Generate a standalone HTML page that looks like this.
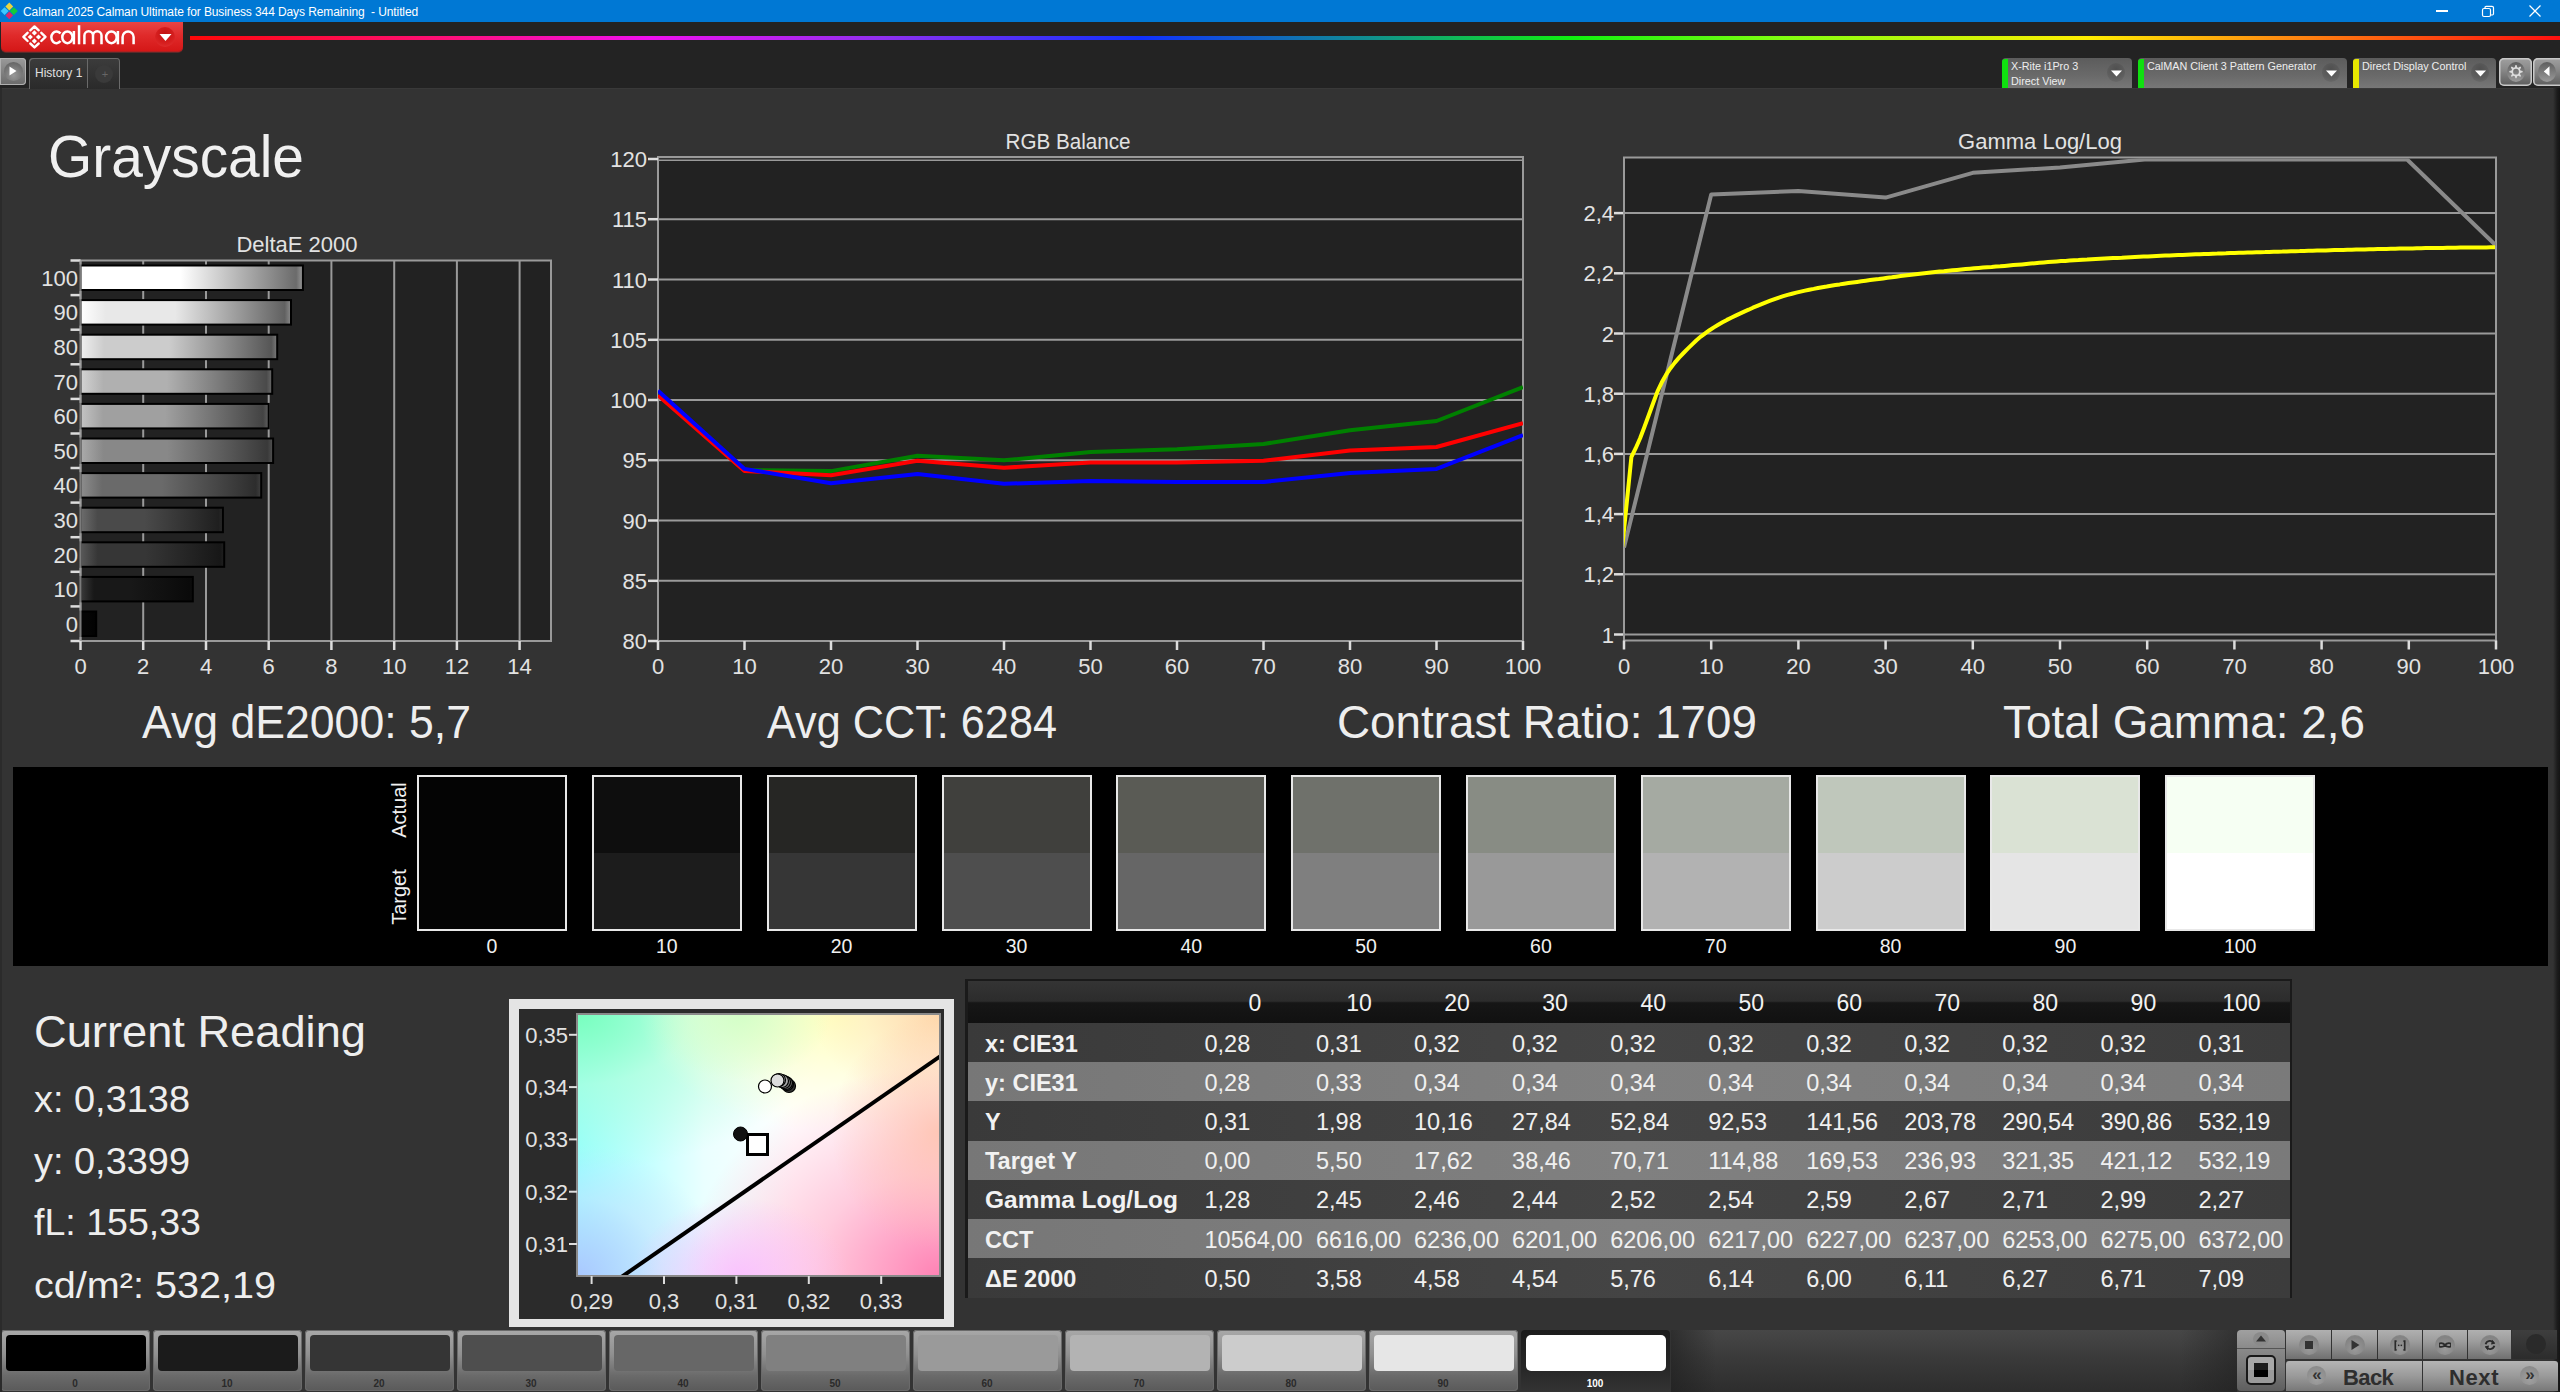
<!DOCTYPE html>
<html><head><meta charset="utf-8"><title>Calman Grayscale</title>
<style>
html,body{margin:0;padding:0;}
body{width:2560px;height:1392px;position:relative;overflow:hidden;background:#333333;font-family:"Liberation Sans", sans-serif;}
svg text{font-family:"Liberation Sans", sans-serif;}
</style></head><body>
<div style="position:absolute;left:0;top:0;width:2560px;height:22px;background:#0078d4"></div><div style="position:absolute;left:0;top:22px;width:2560px;height:66px;background:#232323"></div><div style="position:absolute;left:0;top:88px;width:2560px;height:1px;background:#393939"></div><div style="position:absolute;left:13px;top:767px;width:2535px;height:199px;background:#000"></div><div style="position:absolute;left:417.0px;top:775px;width:146px;height:152px;border:2px solid #e8e8e8;background:linear-gradient(#040404 0 50%,#040404 50% 100%)"></div><div style="position:absolute;left:591.8px;top:775px;width:146px;height:152px;border:2px solid #e8e8e8;background:linear-gradient(#0e0e0e 0 50%,#1c1c1c 50% 100%)"></div><div style="position:absolute;left:766.6px;top:775px;width:146px;height:152px;border:2px solid #e8e8e8;background:linear-gradient(#262624 0 50%,#363636 50% 100%)"></div><div style="position:absolute;left:941.5px;top:775px;width:146px;height:152px;border:2px solid #e8e8e8;background:linear-gradient(#40403d 0 50%,#4e4e4e 50% 100%)"></div><div style="position:absolute;left:1116.3px;top:775px;width:146px;height:152px;border:2px solid #e8e8e8;background:linear-gradient(#5a5b55 0 50%,#666666 50% 100%)"></div><div style="position:absolute;left:1291.1px;top:775px;width:146px;height:152px;border:2px solid #e8e8e8;background:linear-gradient(#6f716b 0 50%,#7f7f7f 50% 100%)"></div><div style="position:absolute;left:1465.9px;top:775px;width:146px;height:152px;border:2px solid #e8e8e8;background:linear-gradient(#888c84 0 50%,#999999 50% 100%)"></div><div style="position:absolute;left:1640.7px;top:775px;width:146px;height:152px;border:2px solid #e8e8e8;background:linear-gradient(#a5aaa2 0 50%,#b2b2b2 50% 100%)"></div><div style="position:absolute;left:1815.6px;top:775px;width:146px;height:152px;border:2px solid #e8e8e8;background:linear-gradient(#bfc7bb 0 50%,#cccccc 50% 100%)"></div><div style="position:absolute;left:1990.4px;top:775px;width:146px;height:152px;border:2px solid #e8e8e8;background:linear-gradient(#dae2d4 0 50%,#e5e5e5 50% 100%)"></div><div style="position:absolute;left:2165.2px;top:775px;width:146px;height:152px;border:2px solid #e8e8e8;background:linear-gradient(#f6fff3 0 50%,#ffffff 50% 100%)"></div><div style="position:absolute;left:509px;top:999px;width:445px;height:328px;background:#e4e4e4"></div><div style="position:absolute;left:519px;top:1009px;width:425px;height:310px;background:#2b2b2b"></div><div style="position:absolute;left:577px;top:1014px;width:363px;height:262px;overflow:hidden;background:#fff"><div style="position:absolute;inset:0;background:linear-gradient(90deg,rgba(150,255,255,1) 0%,rgba(220,255,255,0.6) 35%,rgba(255,255,255,0) 60%)"></div><div style="position:absolute;inset:0;background:radial-gradient(ellipse 70% 60% at 0% 0%,rgba(120,255,190,1) 0%,rgba(170,255,210,0.6) 45%,rgba(255,255,255,0) 100%)"></div><div style="position:absolute;inset:0;background:radial-gradient(ellipse 55% 45% at 72% 0%,rgba(255,255,190,1) 0%,rgba(255,255,210,0.5) 60%,rgba(255,255,255,0) 100%)"></div><div style="position:absolute;inset:0;background:radial-gradient(ellipse 70% 80% at 100% 100%,rgba(255,130,180,1) 0%,rgba(255,170,200,0.6) 50%,rgba(255,255,255,0) 100%)"></div><div style="position:absolute;inset:0;background:radial-gradient(ellipse 40% 50% at 0% 100%,rgba(170,200,255,1) 0%,rgba(200,220,255,0.5) 60%,rgba(255,255,255,0) 100%)"></div><div style="position:absolute;inset:0;background:radial-gradient(ellipse 35% 35% at 100% 0%,rgba(255,215,170,1) 0%,rgba(255,225,190,0.4) 60%,rgba(255,255,255,0) 100%)"></div><div style="position:absolute;inset:0;background:radial-gradient(ellipse 30% 30% at 45% 100%,rgba(250,190,255,0.9) 0%,rgba(255,255,255,0) 100%)"></div><div style="position:absolute;inset:0;background:radial-gradient(ellipse 30% 45% at 100% 45%,rgba(255,190,165,0.75) 0%,rgba(255,255,255,0) 100%)"></div><div style="position:absolute;inset:0;background:radial-gradient(ellipse 25% 25% at 45% 0%,rgba(205,255,195,0.8) 0%,rgba(255,255,255,0) 100%)"></div></div><div style="position:absolute;left:965px;top:979px;width:1327px;height:319px;background:#1a1a1a"></div><div style="position:absolute;left:968px;top:981px;width:1322px;height:42px;background:linear-gradient(#343434 0%,#2c2c2c 48%,#161616 52%,#111 100%)"></div><div style="position:absolute;left:968px;top:1023.0px;width:1322px;height:39.5px;background:linear-gradient(90deg,#3a3a3a 0%,#444 50%,#3c3c3c 100%)"></div><div style="position:absolute;left:968px;top:1062.2px;width:1322px;height:39.5px;background:linear-gradient(90deg,#777 0%,#808080 50%,#7a7a7a 100%)"></div><div style="position:absolute;left:968px;top:1101.4px;width:1322px;height:39.5px;background:linear-gradient(90deg,#3a3a3a 0%,#444 50%,#3c3c3c 100%)"></div><div style="position:absolute;left:968px;top:1140.6px;width:1322px;height:39.5px;background:linear-gradient(90deg,#777 0%,#808080 50%,#7a7a7a 100%)"></div><div style="position:absolute;left:968px;top:1179.8px;width:1322px;height:39.5px;background:linear-gradient(90deg,#3a3a3a 0%,#444 50%,#3c3c3c 100%)"></div><div style="position:absolute;left:968px;top:1219.0px;width:1322px;height:39.5px;background:linear-gradient(90deg,#777 0%,#808080 50%,#7a7a7a 100%)"></div><div style="position:absolute;left:968px;top:1258.2px;width:1322px;height:39.5px;background:linear-gradient(90deg,#3a3a3a 0%,#444 50%,#3c3c3c 100%)"></div><div style="position:absolute;left:0.5px;top:1330px;width:149px;height:61px;border-radius:4px;background:linear-gradient(#a8a8a8 0%,#909090 40%,#6a6a6a 75%,#5a5a5a 100%);box-shadow:inset 0 0 0 1px #6a6a6a"></div><div style="position:absolute;left:5.5px;top:1335px;width:140px;height:36px;border-radius:4px;background:#000000"></div><div style="position:absolute;left:152.5px;top:1330px;width:149px;height:61px;border-radius:4px;background:linear-gradient(#a8a8a8 0%,#909090 40%,#6a6a6a 75%,#5a5a5a 100%);box-shadow:inset 0 0 0 1px #6a6a6a"></div><div style="position:absolute;left:157.5px;top:1335px;width:140px;height:36px;border-radius:4px;background:#1b1b1b"></div><div style="position:absolute;left:304.5px;top:1330px;width:149px;height:61px;border-radius:4px;background:linear-gradient(#a8a8a8 0%,#909090 40%,#6a6a6a 75%,#5a5a5a 100%);box-shadow:inset 0 0 0 1px #6a6a6a"></div><div style="position:absolute;left:309.5px;top:1335px;width:140px;height:36px;border-radius:4px;background:#353535"></div><div style="position:absolute;left:456.5px;top:1330px;width:149px;height:61px;border-radius:4px;background:linear-gradient(#a8a8a8 0%,#909090 40%,#6a6a6a 75%,#5a5a5a 100%);box-shadow:inset 0 0 0 1px #6a6a6a"></div><div style="position:absolute;left:461.5px;top:1335px;width:140px;height:36px;border-radius:4px;background:#4e4e4e"></div><div style="position:absolute;left:608.5px;top:1330px;width:149px;height:61px;border-radius:4px;background:linear-gradient(#a8a8a8 0%,#909090 40%,#6a6a6a 75%,#5a5a5a 100%);box-shadow:inset 0 0 0 1px #6a6a6a"></div><div style="position:absolute;left:613.5px;top:1335px;width:140px;height:36px;border-radius:4px;background:#676767"></div><div style="position:absolute;left:760.5px;top:1330px;width:149px;height:61px;border-radius:4px;background:linear-gradient(#a8a8a8 0%,#909090 40%,#6a6a6a 75%,#5a5a5a 100%);box-shadow:inset 0 0 0 1px #6a6a6a"></div><div style="position:absolute;left:765.5px;top:1335px;width:140px;height:36px;border-radius:4px;background:#808080"></div><div style="position:absolute;left:912.5px;top:1330px;width:149px;height:61px;border-radius:4px;background:linear-gradient(#a8a8a8 0%,#909090 40%,#6a6a6a 75%,#5a5a5a 100%);box-shadow:inset 0 0 0 1px #6a6a6a"></div><div style="position:absolute;left:917.5px;top:1335px;width:140px;height:36px;border-radius:4px;background:#9a9a9a"></div><div style="position:absolute;left:1064.5px;top:1330px;width:149px;height:61px;border-radius:4px;background:linear-gradient(#a8a8a8 0%,#909090 40%,#6a6a6a 75%,#5a5a5a 100%);box-shadow:inset 0 0 0 1px #6a6a6a"></div><div style="position:absolute;left:1069.5px;top:1335px;width:140px;height:36px;border-radius:4px;background:#b3b3b3"></div><div style="position:absolute;left:1216.5px;top:1330px;width:149px;height:61px;border-radius:4px;background:linear-gradient(#a8a8a8 0%,#909090 40%,#6a6a6a 75%,#5a5a5a 100%);box-shadow:inset 0 0 0 1px #6a6a6a"></div><div style="position:absolute;left:1221.5px;top:1335px;width:140px;height:36px;border-radius:4px;background:#cccccc"></div><div style="position:absolute;left:1368.5px;top:1330px;width:149px;height:61px;border-radius:4px;background:linear-gradient(#a8a8a8 0%,#909090 40%,#6a6a6a 75%,#5a5a5a 100%);box-shadow:inset 0 0 0 1px #6a6a6a"></div><div style="position:absolute;left:1373.5px;top:1335px;width:140px;height:36px;border-radius:4px;background:#e6e6e6"></div><div style="position:absolute;left:1520.5px;top:1330px;width:149px;height:61px;border-radius:4px;background:linear-gradient(#1c1c1c 0%,#262626 60%,#333 100%)"></div><div style="position:absolute;left:1525.5px;top:1335px;width:140px;height:36px;border-radius:5px;background:#fff"></div><svg style="position:absolute;left:0;top:0" width="22" height="22" viewBox="0 0 22 22"><path d="M9.3 2.6 L13.2 6.5 L9.3 10.4 L5.4 6.5 Z" fill="#e8d440"/><path d="M4.6 7.2 L8.6 11.1 L4.6 15 L0.7 11.1 Z" fill="#3cc8ff"/><path d="M13.8 7.2 L17.8 11.1 L13.8 15 L9.9 11.1 Z" fill="#12cc3a"/><path d="M9.3 11.6 L13.1 15.5 L9.3 19.3 L5.5 15.5 Z" fill="#d8286e"/></svg><div style="position:absolute;left:23px;top:4px;height:16px;line-height:16px;font-size:12px;color:#fff;white-space:pre;letter-spacing:-0.1px">Calman 2025 Calman Ultimate for Business 344 Days Remaining  - Untitled</div><div style="position:absolute;left:2436px;top:10px;width:12px;height:1.5px;background:#fff"></div><svg style="position:absolute;left:2481px;top:5px" width="14" height="14" viewBox="0 0 14 14" fill="none" stroke="#fff" stroke-width="1.2"><rect x="1.5" y="3.5" width="8" height="8" rx="1.5"/><path d="M4 3.5 V2.5 a1.2 1.2 0 0 1 1.2 -1.2 H11 a1.5 1.5 0 0 1 1.5 1.5 V8.8 a1.2 1.2 0 0 1 -1.2 1.2 H9.5"/></svg><svg style="position:absolute;left:2527px;top:3px" width="16" height="16" viewBox="0 0 16 16" stroke="#fff" stroke-width="1.3"><line x1="2.5" y1="2.5" x2="13.5" y2="13.5"/><line x1="13.5" y1="2.5" x2="2.5" y2="13.5"/></svg><div style="position:absolute;left:1px;top:22px;width:182px;height:30px;border-radius:0 0 5px 5px;background:linear-gradient(#e84444 0%,#e02a2a 45%,#d41616 100%);box-shadow:inset 0 -1px 0 #b02020, 0 1px 0 #5a2a2a"></div><svg style="position:absolute;left:0;top:22px" width="150" height="30" viewBox="0 22 150 30" fill="none" stroke="#fff" stroke-width="2.4" stroke-linecap="round" stroke-linejoin="round"><path d="M30.3 30.3 L34.5 26.4 L38.7 30.3"/><path d="M27.6 32.8 L23.4 36.9 L27.6 41.0"/><path d="M41.3 32.8 L45.5 36.9 L41.3 41.0"/><path d="M30.3 43.5 L34.5 47.4 L38.7 43.5"/><path stroke="none" fill="#fff" d="M34.4 30.3 L37.0 32.9 L34.4 35.5 L31.8 32.9 Z M30.3 34.4 L32.9 37.0 L30.3 39.6 L27.7 37.0 Z M38.5 34.4 L41.1 37.0 L38.5 39.6 L35.9 37.0 Z M34.4 38.5 L37.0 41.1 L34.4 43.7 L31.8 41.1 Z"/></svg><svg style="position:absolute;left:0;top:22px" width="150" height="30" viewBox="0 22 150 30" fill="none" stroke="#fff" stroke-width="2.5"><path d="M60.5 33.5 A5.2 5.85 0 1 0 60.5 41.1"/><ellipse cx="67.4" cy="37.3" rx="5.1" ry="5.85"/><path d="M73.9 31.0 V44.3"/><path d="M79.05 25.2 V44.3"/><path d="M84.4 44.3 V35.6 A4.3 4.3 0 0 1 93.0 35.6 V44.3 M93.0 35.6 A4.25 4.25 0 0 1 101.5 35.6 V44.3"/><ellipse cx="111.4" cy="37.3" rx="5.3" ry="5.85"/><path d="M117.9 31.0 V44.3"/><path d="M122.6 44.3 V36.9 A5.5 5.5 0 0 1 133.6 36.9 V44.3"/></svg><div style="position:absolute;left:155px;top:27px;width:20px;height:20px;border-radius:50%;background:radial-gradient(circle at 50% 35%,#c01010 0%,#d82020 60%,#e43a3a 100%)"></div><svg style="position:absolute;left:159px;top:33px" width="13" height="9" viewBox="0 0 13 9"><path d="M0.5 1 H12.5 L6.5 8 Z" fill="#fff"/></svg><div style="position:absolute;left:190px;top:35.5px;width:2370px;height:4.5px;background:linear-gradient(90deg,#ff0808 0%,#ff1080 11.4%,#f010f0 19.4%,#9030f0 29.2%,#1030ff 40.1%,#109090 49.8%,#10f010 58.3%,#80ff10 67.2%,#ffee00 80%,#ff9010 87.9%,#ff1010 100%)"></div><div style="position:absolute;left:0px;top:58px;width:26px;height:27px;border-radius:0 4px 4px 0;background:linear-gradient(#9a9a9a,#6a6a6a);box-shadow:inset 0 0 0 1px #b0b0b0"></div><div style="position:absolute;left:4px;top:62px;width:19px;height:19px;border-radius:50%;background:radial-gradient(circle at 50% 70%,#999 0%,#666 80%)"></div><svg style="position:absolute;left:9px;top:66px" width="8" height="10" viewBox="0 0 8 10"><path d="M0.5 0.5 L7.5 5 L0.5 9.5 Z" fill="#fff"/></svg><div style="position:absolute;left:29px;top:57.5px;width:91px;height:31px;border-radius:4px 4px 0 0;background:linear-gradient(#3c3c3c,#2a2a2a);box-shadow:inset 1px 1px 0 #6a6a6a,inset -1px 0 0 #6a6a6a"></div><div style="position:absolute;left:87px;top:58px;width:1px;height:30px;background:#6a6a6a"></div><div style="position:absolute;left:35px;top:65px;height:16px;line-height:16px;font-size:12px;color:#e0e0e0">History 1</div><div style="position:absolute;left:95px;top:65px;width:18px;height:18px;border-radius:50%;background:#3a3a3a"></div><div style="position:absolute;left:100px;top:66px;width:10px;height:16px;line-height:16px;font-size:11px;color:#666;text-align:center">+</div><div style="position:absolute;left:2002px;top:58px;width:130px;height:30px;border-radius:4px 4px 0 0;background:linear-gradient(#5c5c5c 0%,#6a6a6a 60%,#777 100%)"></div><div style="position:absolute;left:2002px;top:59px;width:6px;height:29px;border-radius:3px 0 0 0;background:#10e010"></div><div style="position:absolute;left:2011px;top:59px;height:14px;line-height:14px;font-size:10.8px;color:#eee;white-space:pre">X-Rite i1Pro 3</div><div style="position:absolute;left:2011px;top:73.5px;height:14px;line-height:14px;font-size:10.8px;color:#eee;white-space:pre">Direct View</div><div style="position:absolute;left:2107px;top:63px;width:18px;height:19px;border-radius:50%;background:radial-gradient(circle at 50% 30%,#505050 0%,#5e5e5e 60%,#707070 100%)"></div><svg style="position:absolute;left:2110.5px;top:70px" width="11" height="7" viewBox="0 0 11 7"><path d="M0 0.5 H11 L5.5 6.5 Z" fill="#fff"/></svg><div style="position:absolute;left:2138px;top:58px;width:209px;height:30px;border-radius:4px 4px 0 0;background:linear-gradient(#5c5c5c 0%,#6a6a6a 60%,#777 100%)"></div><div style="position:absolute;left:2138px;top:59px;width:6px;height:29px;border-radius:3px 0 0 0;background:#10e010"></div><div style="position:absolute;left:2147px;top:59px;height:14px;line-height:14px;font-size:10.8px;color:#eee;white-space:pre">CalMAN Client 3 Pattern Generator</div><div style="position:absolute;left:2322px;top:63px;width:18px;height:19px;border-radius:50%;background:radial-gradient(circle at 50% 30%,#505050 0%,#5e5e5e 60%,#707070 100%)"></div><svg style="position:absolute;left:2325.5px;top:70px" width="11" height="7" viewBox="0 0 11 7"><path d="M0 0.5 H11 L5.5 6.5 Z" fill="#fff"/></svg><div style="position:absolute;left:2353px;top:58px;width:143px;height:30px;border-radius:4px 4px 0 0;background:linear-gradient(#5c5c5c 0%,#6a6a6a 60%,#777 100%)"></div><div style="position:absolute;left:2353px;top:59px;width:6px;height:29px;border-radius:3px 0 0 0;background:#e8e800"></div><div style="position:absolute;left:2362px;top:59px;height:14px;line-height:14px;font-size:10.8px;color:#eee;white-space:pre">Direct Display Control</div><div style="position:absolute;left:2471px;top:63px;width:18px;height:19px;border-radius:50%;background:radial-gradient(circle at 50% 30%,#505050 0%,#5e5e5e 60%,#707070 100%)"></div><svg style="position:absolute;left:2474.5px;top:70px" width="11" height="7" viewBox="0 0 11 7"><path d="M0 0.5 H11 L5.5 6.5 Z" fill="#fff"/></svg><div style="position:absolute;left:2499px;top:58px;width:33px;height:28px;border-radius:5px;background:linear-gradient(#a0a0a0,#8a8a8a 40%,#5c5c5c);box-shadow:inset 0 0 0 1.5px #c8c8c8"></div><div style="position:absolute;left:2507px;top:62px;width:18px;height:20px;border-radius:50%;background:linear-gradient(#5e5e5e,#9a9a9a)"></div><svg style="position:absolute;left:2499px;top:58px" width="34" height="28" viewBox="2499 58 34 28"><path fill="#dcdcdc" fill-rule="evenodd" d="M2514.81 67.26 L2515.42 65.03 L2516.58 65.03 L2517.19 67.26 L2518.30 67.72 L2520.31 66.57 L2521.13 67.39 L2519.98 69.40 L2520.44 70.51 L2522.67 71.12 L2522.67 72.28 L2520.44 72.89 L2519.98 74.00 L2521.13 76.01 L2520.31 76.83 L2518.30 75.68 L2517.19 76.14 L2516.58 78.37 L2515.42 78.37 L2514.81 76.14 L2513.70 75.68 L2511.69 76.83 L2510.87 76.01 L2512.02 74.00 L2511.56 72.89 L2509.33 72.28 L2509.33 71.12 L2511.56 70.51 L2512.02 69.40 L2510.87 67.39 L2511.69 66.57 L2513.70 67.72 Z M2518.90 71.70 A2.9 2.9 0 1 0 2513.10 71.70 A2.9 2.9 0 1 0 2518.90 71.70 Z"/></svg><div style="position:absolute;left:2533px;top:58px;width:30px;height:28px;border-radius:5px 0 0 5px;background:linear-gradient(#a0a0a0,#8a8a8a 40%,#5c5c5c);box-shadow:inset 0 0 0 1.5px #c8c8c8"></div><div style="position:absolute;left:2538px;top:62px;width:18px;height:20px;border-radius:50%;background:linear-gradient(#5e5e5e,#9a9a9a)"></div><svg style="position:absolute;left:2543px;top:66px" width="8" height="11" viewBox="0 0 8 11"><path d="M6.5 0.3 L0.8 5.5 L6.5 10.3 Z" fill="#fff"/></svg><div style="position:absolute;left:2553px;top:88px;width:7px;height:1304px;background:linear-gradient(90deg,#333 0%,#1c1c1c 60%,#141414 100%)"></div><div style="position:absolute;left:0px;top:88px;width:2px;height:1304px;background:#2b2b2b"></div><div style="position:absolute;left:1671px;top:1330px;width:566px;height:62px;background:linear-gradient(90deg,rgba(51,51,51,0) 0%,rgba(51,51,51,0) 100%),linear-gradient(#474747 0%,#3a3a3a 45%,#2d2d2d 100%)"></div><div style="position:absolute;left:1671px;top:1330px;width:566px;height:62px;background:linear-gradient(90deg,rgba(30,30,30,0.6) 0%,rgba(30,30,30,0) 8%,rgba(30,30,30,0) 90%,rgba(30,30,30,0.5) 100%)"></div><div style="position:absolute;left:2237px;top:1330px;width:48px;height:61px;border-radius:4px;background:linear-gradient(#a0a0a0 0%,#8a8a8a 30%,#7a7a7a 60%,#5e5e5e 100%)"></div><div style="position:absolute;left:2237px;top:1348px;width:48px;height:1px;background:#555"></div><div style="position:absolute;left:2253px;top:1332px;width:16px;height:14px;border-radius:50%;background:#8a8a8a"></div><svg style="position:absolute;left:2256px;top:1335px" width="10" height="7" viewBox="0 0 10 7"><path d="M0 6.5 L5 0.5 L10 6.5 Z" fill="#333"/></svg><div style="position:absolute;left:2246px;top:1354.5px;width:30px;height:30px;border-radius:5px;border:2.5px solid #181818;background:linear-gradient(#a8a8a8 0%,#a8a8a8 50%,#9a9a9a 50%,#9a9a9a 100%);box-sizing:border-box"></div><div style="position:absolute;left:2254px;top:1363px;width:14px;height:14px;background:linear-gradient(#1c1c1c 50%,#000 50%)"></div><div style="position:absolute;left:2286px;top:1330px;width:45px;height:29px;border-radius:0;background:linear-gradient(#b0b0b0 0%,#9c9c9c 40%,#707070 100%)"></div><div style="position:absolute;left:2299.0px;top:1335px;width:20px;height:20px;border-radius:50%;background:radial-gradient(circle at 50% 70%,#9a9a9a 0%,#838383 70%,#8c8c8c 100%)"></div><div style="position:absolute;left:2332px;top:1330px;width:44.5px;height:29px;border-radius:0;background:linear-gradient(#b0b0b0 0%,#9c9c9c 40%,#707070 100%)"></div><div style="position:absolute;left:2344.8px;top:1335px;width:20px;height:20px;border-radius:50%;background:radial-gradient(circle at 50% 70%,#9a9a9a 0%,#838383 70%,#8c8c8c 100%)"></div><div style="position:absolute;left:2377.5px;top:1330px;width:44.0px;height:29px;border-radius:0;background:linear-gradient(#b0b0b0 0%,#9c9c9c 40%,#707070 100%)"></div><div style="position:absolute;left:2390.0px;top:1335px;width:20px;height:20px;border-radius:50%;background:radial-gradient(circle at 50% 70%,#9a9a9a 0%,#838383 70%,#8c8c8c 100%)"></div><div style="position:absolute;left:2422.5px;top:1330px;width:44.0px;height:29px;border-radius:0;background:linear-gradient(#b0b0b0 0%,#9c9c9c 40%,#707070 100%)"></div><div style="position:absolute;left:2435.0px;top:1335px;width:20px;height:20px;border-radius:50%;background:radial-gradient(circle at 50% 70%,#9a9a9a 0%,#838383 70%,#8c8c8c 100%)"></div><div style="position:absolute;left:2467.5px;top:1330px;width:43.5px;height:29px;border-radius:0;background:linear-gradient(#b0b0b0 0%,#9c9c9c 40%,#707070 100%)"></div><div style="position:absolute;left:2479.8px;top:1335px;width:20px;height:20px;border-radius:50%;background:radial-gradient(circle at 50% 70%,#9a9a9a 0%,#838383 70%,#8c8c8c 100%)"></div><svg style="position:absolute;left:2303.0px;top:1339px" width="12" height="12" viewBox="0 0 12 12"><rect x="2" y="2" width="8" height="8" fill="#333"/></svg><svg style="position:absolute;left:2348.8px;top:1339px" width="12" height="12" viewBox="0 0 12 12"><path d="M2.5 1 L10.5 6 L2.5 11 Z" fill="#333"/></svg><svg style="position:absolute;left:2394.0px;top:1339px" width="12" height="12" viewBox="0 0 12 12"><path d="M2.6 2.2 H1.3 V10.8 H2.6 M9.4 2.2 H10.7 V10.8 H9.4" stroke="#2a2a2a" stroke-width="1.7" fill="none"/><rect x="3.9" y="5.6" width="1.5" height="1.5" fill="#2a2a2a"/><rect x="6.6" y="5.6" width="1.5" height="1.5" fill="#2a2a2a"/></svg><svg style="position:absolute;left:2439.0px;top:1339px" width="12" height="12" viewBox="0 0 12 12"><path d="M6 6 C4.2 3.6 0.6 3.4 0.6 6 C0.6 8.6 4.2 8.4 6 6 C7.8 3.6 11.4 3.4 11.4 6 C11.4 8.6 7.8 8.4 6 6 Z" stroke="#2a2a2a" stroke-width="1.7" fill="none" transform="translate(6 6) scale(1.15 1) translate(-6 -6)"/></svg><svg style="position:absolute;left:2483.8px;top:1339px" width="12" height="12" viewBox="0 0 12 12"><path d="M10 4.2 A4.6 4.6 0 0 0 1.6 5.2 M2 7.8 A4.6 4.6 0 0 0 10.4 6.8" stroke="#2a2a2a" stroke-width="1.9" fill="none"/><path d="M8.2 0.8 L11.2 4.8 L7 5.4 Z M3.8 11.4 L0.8 7.2 L5 6.6 Z" fill="#2a2a2a"/></svg><div style="position:absolute;left:2512px;top:1330px;width:45px;height:29px;border-radius:0;background:linear-gradient(#3e3e3e,#2c2c2c)"></div><div style="position:absolute;left:2526px;top:1334px;width:20px;height:20px;border-radius:50%;background:#2a2a2a"></div><div style="position:absolute;left:2286px;top:1361px;width:136px;height:30px;border-radius:3px 0 0 0;background:linear-gradient(#b4b4b4 0%,#9a9a9a 50%,#787878 100%)"></div><div style="position:absolute;left:2423px;top:1361px;width:135px;height:30px;border-radius:0 3px 0 0;background:linear-gradient(#b4b4b4 0%,#9a9a9a 50%,#787878 100%)"></div><div style="position:absolute;left:2307px;top:1366px;width:19px;height:19px;border-radius:50%;background:radial-gradient(circle at 50% 70%,#a0a0a0 0%,#8a8a8a 80%)"></div><div style="position:absolute;left:2520px;top:1366px;width:19px;height:19px;border-radius:50%;background:radial-gradient(circle at 50% 70%,#a0a0a0 0%,#8a8a8a 80%)"></div><div style="position:absolute;left:2310px;top:1364px;width:14px;height:22px;line-height:22px;font-size:17px;color:#333;text-align:center;font-weight:700">«</div><div style="position:absolute;left:2523px;top:1364px;width:14px;height:22px;line-height:22px;font-size:17px;color:#333;text-align:center;font-weight:700">»</div><div style="position:absolute;left:2343px;top:1362.5px;height:28px;line-height:30px;font-size:22px;color:#2e2e2e;font-weight:700;letter-spacing:-0.6px">Back</div><div style="position:absolute;left:2449px;top:1362.5px;height:28px;line-height:30px;font-size:22px;color:#2e2e2e;font-weight:700;letter-spacing:0.6px">Next</div>
<svg width="2560" height="1392" viewBox="0 0 2560 1392" style="position:absolute;left:0;top:0">
<defs>
<linearGradient id="bar0" x1="0" y1="0" x2="1" y2="0"><stop offset="0" stop-color="#282828"/><stop offset="0.12" stop-color="#050505"/><stop offset="0.45" stop-color="#050505"/><stop offset="0.97" stop-color="#020202"/><stop offset="1" stop-color="#030303"/></linearGradient><linearGradient id="bar1" x1="0" y1="0" x2="1" y2="0"><stop offset="0" stop-color="#3b3b3b"/><stop offset="0.12" stop-color="#181818"/><stop offset="0.45" stop-color="#181818"/><stop offset="0.97" stop-color="#0a0a0a"/><stop offset="1" stop-color="#0e0e0e"/></linearGradient><linearGradient id="bar2" x1="0" y1="0" x2="1" y2="0"><stop offset="0" stop-color="#595959"/><stop offset="0.12" stop-color="#363636"/><stop offset="0.45" stop-color="#363636"/><stop offset="0.97" stop-color="#171717"/><stop offset="1" stop-color="#202020"/></linearGradient><linearGradient id="bar3" x1="0" y1="0" x2="1" y2="0"><stop offset="0" stop-color="#6d6d6d"/><stop offset="0.12" stop-color="#4a4a4a"/><stop offset="0.45" stop-color="#4a4a4a"/><stop offset="0.97" stop-color="#1f1f1f"/><stop offset="1" stop-color="#2c2c2c"/></linearGradient><linearGradient id="bar4" x1="0" y1="0" x2="1" y2="0"><stop offset="0" stop-color="#8d8d8d"/><stop offset="0.12" stop-color="#6a6a6a"/><stop offset="0.45" stop-color="#6a6a6a"/><stop offset="0.97" stop-color="#2d2d2d"/><stop offset="1" stop-color="#404040"/></linearGradient><linearGradient id="bar5" x1="0" y1="0" x2="1" y2="0"><stop offset="0" stop-color="#ababab"/><stop offset="0.12" stop-color="#888888"/><stop offset="0.45" stop-color="#888888"/><stop offset="0.97" stop-color="#393939"/><stop offset="1" stop-color="#525252"/></linearGradient><linearGradient id="bar6" x1="0" y1="0" x2="1" y2="0"><stop offset="0" stop-color="#c3c3c3"/><stop offset="0.12" stop-color="#a0a0a0"/><stop offset="0.45" stop-color="#a0a0a0"/><stop offset="0.97" stop-color="#434343"/><stop offset="1" stop-color="#606060"/></linearGradient><linearGradient id="bar7" x1="0" y1="0" x2="1" y2="0"><stop offset="0" stop-color="#d3d3d3"/><stop offset="0.12" stop-color="#b0b0b0"/><stop offset="0.45" stop-color="#b0b0b0"/><stop offset="0.97" stop-color="#4a4a4a"/><stop offset="1" stop-color="#6a6a6a"/></linearGradient><linearGradient id="bar8" x1="0" y1="0" x2="1" y2="0"><stop offset="0" stop-color="#efefef"/><stop offset="0.12" stop-color="#cccccc"/><stop offset="0.45" stop-color="#cccccc"/><stop offset="0.97" stop-color="#565656"/><stop offset="1" stop-color="#7a7a7a"/></linearGradient><linearGradient id="bar9" x1="0" y1="0" x2="1" y2="0"><stop offset="0" stop-color="#ffffff"/><stop offset="0.12" stop-color="#e8e8e8"/><stop offset="0.45" stop-color="#e8e8e8"/><stop offset="0.97" stop-color="#616161"/><stop offset="1" stop-color="#8b8b8b"/></linearGradient><linearGradient id="bar10" x1="0" y1="0" x2="1" y2="0"><stop offset="0" stop-color="#ffffff"/><stop offset="0.12" stop-color="#ffffff"/><stop offset="0.45" stop-color="#ffffff"/><stop offset="0.97" stop-color="#6b6b6b"/><stop offset="1" stop-color="#999999"/></linearGradient>
</defs>
<rect x="80.5" y="260.5" width="470.5" height="380.5" fill="#222222"/><line x1="143.2" y1="260.5" x2="143.2" y2="641" stroke="#9a9a9a" stroke-width="2"/><line x1="206.0" y1="260.5" x2="206.0" y2="641" stroke="#9a9a9a" stroke-width="2"/><line x1="268.7" y1="260.5" x2="268.7" y2="641" stroke="#9a9a9a" stroke-width="2"/><line x1="331.4" y1="260.5" x2="331.4" y2="641" stroke="#9a9a9a" stroke-width="2"/><line x1="394.2" y1="260.5" x2="394.2" y2="641" stroke="#9a9a9a" stroke-width="2"/><line x1="456.9" y1="260.5" x2="456.9" y2="641" stroke="#9a9a9a" stroke-width="2"/><line x1="519.6" y1="260.5" x2="519.6" y2="641" stroke="#9a9a9a" stroke-width="2"/><rect x="80.5" y="260.5" width="470.5" height="380.5" fill="none" stroke="#9a9a9a" stroke-width="2"/><line x1="80.5" y1="641" x2="80.5" y2="650" stroke="#dddddd" stroke-width="2.5"/><text x="80.5" y="674.0" font-size="22" fill="#e2e2e2" text-anchor="middle" font-weight="400" >0</text><line x1="143.2" y1="641" x2="143.2" y2="650" stroke="#dddddd" stroke-width="2.5"/><text x="143.2" y="674.0" font-size="22" fill="#e2e2e2" text-anchor="middle" font-weight="400" >2</text><line x1="206.0" y1="641" x2="206.0" y2="650" stroke="#dddddd" stroke-width="2.5"/><text x="206.0" y="674.0" font-size="22" fill="#e2e2e2" text-anchor="middle" font-weight="400" >4</text><line x1="268.7" y1="641" x2="268.7" y2="650" stroke="#dddddd" stroke-width="2.5"/><text x="268.7" y="674.0" font-size="22" fill="#e2e2e2" text-anchor="middle" font-weight="400" >6</text><line x1="331.4" y1="641" x2="331.4" y2="650" stroke="#dddddd" stroke-width="2.5"/><text x="331.4" y="674.0" font-size="22" fill="#e2e2e2" text-anchor="middle" font-weight="400" >8</text><line x1="394.2" y1="641" x2="394.2" y2="650" stroke="#dddddd" stroke-width="2.5"/><text x="394.2" y="674.0" font-size="22" fill="#e2e2e2" text-anchor="middle" font-weight="400" >10</text><line x1="456.9" y1="641" x2="456.9" y2="650" stroke="#dddddd" stroke-width="2.5"/><text x="456.9" y="674.0" font-size="22" fill="#e2e2e2" text-anchor="middle" font-weight="400" >12</text><line x1="519.6" y1="641" x2="519.6" y2="650" stroke="#dddddd" stroke-width="2.5"/><text x="519.6" y="674.0" font-size="22" fill="#e2e2e2" text-anchor="middle" font-weight="400" >14</text><line x1="70.5" y1="641.0" x2="80.5" y2="641.0" stroke="#dddddd" stroke-width="2.5"/><line x1="70.5" y1="606.4" x2="80.5" y2="606.4" stroke="#dddddd" stroke-width="2.5"/><line x1="70.5" y1="571.8" x2="80.5" y2="571.8" stroke="#dddddd" stroke-width="2.5"/><line x1="70.5" y1="537.2" x2="80.5" y2="537.2" stroke="#dddddd" stroke-width="2.5"/><line x1="70.5" y1="502.6" x2="80.5" y2="502.6" stroke="#dddddd" stroke-width="2.5"/><line x1="70.5" y1="468.0" x2="80.5" y2="468.0" stroke="#dddddd" stroke-width="2.5"/><line x1="70.5" y1="433.5" x2="80.5" y2="433.5" stroke="#dddddd" stroke-width="2.5"/><line x1="70.5" y1="398.9" x2="80.5" y2="398.9" stroke="#dddddd" stroke-width="2.5"/><line x1="70.5" y1="364.3" x2="80.5" y2="364.3" stroke="#dddddd" stroke-width="2.5"/><line x1="70.5" y1="329.7" x2="80.5" y2="329.7" stroke="#dddddd" stroke-width="2.5"/><line x1="70.5" y1="295.1" x2="80.5" y2="295.1" stroke="#dddddd" stroke-width="2.5"/><line x1="70.5" y1="260.5" x2="80.5" y2="260.5" stroke="#dddddd" stroke-width="2.5"/><text x="78.0" y="631.7" font-size="22" fill="#e2e2e2" text-anchor="end" font-weight="400" >0</text><rect x="80.5" y="611.5" width="15.7" height="24.5" fill="url(#bar0)" stroke="#000" stroke-width="2"/><text x="78.0" y="597.1" font-size="22" fill="#e2e2e2" text-anchor="end" font-weight="400" >10</text><rect x="80.5" y="576.9" width="112.3" height="24.5" fill="url(#bar1)" stroke="#000" stroke-width="2"/><text x="78.0" y="562.5" font-size="22" fill="#e2e2e2" text-anchor="end" font-weight="400" >20</text><rect x="80.5" y="542.3" width="143.7" height="24.5" fill="url(#bar2)" stroke="#000" stroke-width="2"/><text x="78.0" y="527.9" font-size="22" fill="#e2e2e2" text-anchor="end" font-weight="400" >30</text><rect x="80.5" y="507.7" width="142.4" height="24.5" fill="url(#bar3)" stroke="#000" stroke-width="2"/><text x="78.0" y="493.3" font-size="22" fill="#e2e2e2" text-anchor="end" font-weight="400" >40</text><rect x="80.5" y="473.1" width="180.7" height="24.5" fill="url(#bar4)" stroke="#000" stroke-width="2"/><text x="78.0" y="458.8" font-size="22" fill="#e2e2e2" text-anchor="end" font-weight="400" >50</text><rect x="80.5" y="438.5" width="192.6" height="24.5" fill="url(#bar5)" stroke="#000" stroke-width="2"/><text x="78.0" y="424.2" font-size="22" fill="#e2e2e2" text-anchor="end" font-weight="400" >60</text><rect x="80.5" y="403.9" width="188.2" height="24.5" fill="url(#bar6)" stroke="#000" stroke-width="2"/><text x="78.0" y="389.6" font-size="22" fill="#e2e2e2" text-anchor="end" font-weight="400" >70</text><rect x="80.5" y="369.3" width="191.7" height="24.5" fill="url(#bar7)" stroke="#000" stroke-width="2"/><text x="78.0" y="355.0" font-size="22" fill="#e2e2e2" text-anchor="end" font-weight="400" >80</text><rect x="80.5" y="334.7" width="196.7" height="24.5" fill="url(#bar8)" stroke="#000" stroke-width="2"/><text x="78.0" y="320.4" font-size="22" fill="#e2e2e2" text-anchor="end" font-weight="400" >90</text><rect x="80.5" y="300.1" width="210.5" height="24.5" fill="url(#bar9)" stroke="#000" stroke-width="2"/><text x="78.0" y="285.8" font-size="22" fill="#e2e2e2" text-anchor="end" font-weight="400" >100</text><rect x="80.5" y="265.5" width="222.4" height="24.5" fill="url(#bar10)" stroke="#000" stroke-width="2"/><line x1="80.5" y1="260.5" x2="80.5" y2="641" stroke="#9a9a9a" stroke-width="2" opacity="0.8"/><text x="297.0" y="252.0" font-size="22" fill="#e2e2e2" text-anchor="middle" font-weight="400" >DeltaE 2000</text><rect x="658" y="159" width="865" height="482" fill="#222222"/><line x1="658" y1="580.8" x2="1523" y2="580.8" stroke="#9a9a9a" stroke-width="2"/><line x1="658" y1="520.5" x2="1523" y2="520.5" stroke="#9a9a9a" stroke-width="2"/><line x1="658" y1="460.2" x2="1523" y2="460.2" stroke="#9a9a9a" stroke-width="2"/><line x1="658" y1="400.0" x2="1523" y2="400.0" stroke="#9a9a9a" stroke-width="2"/><line x1="658" y1="339.8" x2="1523" y2="339.8" stroke="#9a9a9a" stroke-width="2"/><line x1="658" y1="279.5" x2="1523" y2="279.5" stroke="#9a9a9a" stroke-width="2"/><line x1="658" y1="219.2" x2="1523" y2="219.2" stroke="#9a9a9a" stroke-width="2"/><rect x="658" y="157" width="865" height="484" fill="none" stroke="#9a9a9a" stroke-width="2"/><line x1="658" y1="160.2" x2="1523" y2="160.2" stroke="#9a9a9a" stroke-width="1.5"/><line x1="648" y1="641.0" x2="658" y2="641.0" stroke="#dddddd" stroke-width="2.5"/><text x="647.0" y="649.0" font-size="22" fill="#e2e2e2" text-anchor="end" font-weight="400" >80</text><line x1="648" y1="580.8" x2="658" y2="580.8" stroke="#dddddd" stroke-width="2.5"/><text x="647.0" y="588.8" font-size="22" fill="#e2e2e2" text-anchor="end" font-weight="400" >85</text><line x1="648" y1="520.5" x2="658" y2="520.5" stroke="#dddddd" stroke-width="2.5"/><text x="647.0" y="528.5" font-size="22" fill="#e2e2e2" text-anchor="end" font-weight="400" >90</text><line x1="648" y1="460.2" x2="658" y2="460.2" stroke="#dddddd" stroke-width="2.5"/><text x="647.0" y="468.2" font-size="22" fill="#e2e2e2" text-anchor="end" font-weight="400" >95</text><line x1="648" y1="400.0" x2="658" y2="400.0" stroke="#dddddd" stroke-width="2.5"/><text x="647.0" y="408.0" font-size="22" fill="#e2e2e2" text-anchor="end" font-weight="400" >100</text><line x1="648" y1="339.8" x2="658" y2="339.8" stroke="#dddddd" stroke-width="2.5"/><text x="647.0" y="347.8" font-size="22" fill="#e2e2e2" text-anchor="end" font-weight="400" >105</text><line x1="648" y1="279.5" x2="658" y2="279.5" stroke="#dddddd" stroke-width="2.5"/><text x="647.0" y="287.5" font-size="22" fill="#e2e2e2" text-anchor="end" font-weight="400" >110</text><line x1="648" y1="219.2" x2="658" y2="219.2" stroke="#dddddd" stroke-width="2.5"/><text x="647.0" y="227.2" font-size="22" fill="#e2e2e2" text-anchor="end" font-weight="400" >115</text><line x1="648" y1="159.0" x2="658" y2="159.0" stroke="#dddddd" stroke-width="2.5"/><text x="647.0" y="167.0" font-size="22" fill="#e2e2e2" text-anchor="end" font-weight="400" >120</text><line x1="658.0" y1="641" x2="658.0" y2="650" stroke="#dddddd" stroke-width="2.5"/><text x="658.0" y="674.0" font-size="22" fill="#e2e2e2" text-anchor="middle" font-weight="400" >0</text><line x1="744.5" y1="641" x2="744.5" y2="650" stroke="#dddddd" stroke-width="2.5"/><text x="744.5" y="674.0" font-size="22" fill="#e2e2e2" text-anchor="middle" font-weight="400" >10</text><line x1="831.0" y1="641" x2="831.0" y2="650" stroke="#dddddd" stroke-width="2.5"/><text x="831.0" y="674.0" font-size="22" fill="#e2e2e2" text-anchor="middle" font-weight="400" >20</text><line x1="917.5" y1="641" x2="917.5" y2="650" stroke="#dddddd" stroke-width="2.5"/><text x="917.5" y="674.0" font-size="22" fill="#e2e2e2" text-anchor="middle" font-weight="400" >30</text><line x1="1004.0" y1="641" x2="1004.0" y2="650" stroke="#dddddd" stroke-width="2.5"/><text x="1004.0" y="674.0" font-size="22" fill="#e2e2e2" text-anchor="middle" font-weight="400" >40</text><line x1="1090.5" y1="641" x2="1090.5" y2="650" stroke="#dddddd" stroke-width="2.5"/><text x="1090.5" y="674.0" font-size="22" fill="#e2e2e2" text-anchor="middle" font-weight="400" >50</text><line x1="1177.0" y1="641" x2="1177.0" y2="650" stroke="#dddddd" stroke-width="2.5"/><text x="1177.0" y="674.0" font-size="22" fill="#e2e2e2" text-anchor="middle" font-weight="400" >60</text><line x1="1263.5" y1="641" x2="1263.5" y2="650" stroke="#dddddd" stroke-width="2.5"/><text x="1263.5" y="674.0" font-size="22" fill="#e2e2e2" text-anchor="middle" font-weight="400" >70</text><line x1="1350.0" y1="641" x2="1350.0" y2="650" stroke="#dddddd" stroke-width="2.5"/><text x="1350.0" y="674.0" font-size="22" fill="#e2e2e2" text-anchor="middle" font-weight="400" >80</text><line x1="1436.5" y1="641" x2="1436.5" y2="650" stroke="#dddddd" stroke-width="2.5"/><text x="1436.5" y="674.0" font-size="22" fill="#e2e2e2" text-anchor="middle" font-weight="400" >90</text><line x1="1523.0" y1="641" x2="1523.0" y2="650" stroke="#dddddd" stroke-width="2.5"/><text x="1523.0" y="674.0" font-size="22" fill="#e2e2e2" text-anchor="middle" font-weight="400" >100</text><text x="1068.0" y="149.0" font-size="22" fill="#e2e2e2" text-anchor="middle" font-weight="400" textLength="125" lengthAdjust="spacingAndGlyphs">RGB Balance</text><clipPath id="rgbclip"><rect x="658" y="159" width="865" height="482"/></clipPath><g clip-path="url(#rgbclip)"><polyline points="658.0,393.0 744.5,470.0 831.0,471.1 917.5,455.7 1004.0,460.3 1090.5,452.0 1177.0,449.3 1263.5,444.0 1350.0,430.2 1436.5,421.0 1523.0,387.2" fill="none" stroke="#008000" stroke-width="4" stroke-linejoin="round"/><polyline points="658.0,395.3 744.5,471.0 831.0,475.3 917.5,460.8 1004.0,467.7 1090.5,462.6 1177.0,462.4 1263.5,460.8 1350.0,450.5 1436.5,447.0 1523.0,423.3" fill="none" stroke="#ff0000" stroke-width="4" stroke-linejoin="round"/><polyline points="658.0,390.7 744.5,468.9 831.0,483.3 917.5,473.9 1004.0,483.8 1090.5,481.0 1177.0,482.0 1263.5,482.0 1350.0,473.0 1436.5,468.9 1523.0,435.0" fill="none" stroke="#0000ff" stroke-width="4" stroke-linejoin="round"/></g><rect x="1624" y="157.5" width="872" height="483.0" fill="#222222"/><line x1="1624" y1="634.5" x2="2496" y2="634.5" stroke="#9a9a9a" stroke-width="2"/><line x1="1614" y1="634.5" x2="1624" y2="634.5" stroke="#dddddd" stroke-width="2.5"/><text x="1614.0" y="642.5" font-size="22" fill="#e2e2e2" text-anchor="end" font-weight="400" >1</text><line x1="1624" y1="574.3" x2="2496" y2="574.3" stroke="#9a9a9a" stroke-width="2"/><line x1="1614" y1="574.3" x2="1624" y2="574.3" stroke="#dddddd" stroke-width="2.5"/><text x="1614.0" y="582.3" font-size="22" fill="#e2e2e2" text-anchor="end" font-weight="400" >1,2</text><line x1="1624" y1="514.1" x2="2496" y2="514.1" stroke="#9a9a9a" stroke-width="2"/><line x1="1614" y1="514.1" x2="1624" y2="514.1" stroke="#dddddd" stroke-width="2.5"/><text x="1614.0" y="522.1" font-size="22" fill="#e2e2e2" text-anchor="end" font-weight="400" >1,4</text><line x1="1624" y1="453.9" x2="2496" y2="453.9" stroke="#9a9a9a" stroke-width="2"/><line x1="1614" y1="453.9" x2="1624" y2="453.9" stroke="#dddddd" stroke-width="2.5"/><text x="1614.0" y="461.9" font-size="22" fill="#e2e2e2" text-anchor="end" font-weight="400" >1,6</text><line x1="1624" y1="393.7" x2="2496" y2="393.7" stroke="#9a9a9a" stroke-width="2"/><line x1="1614" y1="393.7" x2="1624" y2="393.7" stroke="#dddddd" stroke-width="2.5"/><text x="1614.0" y="401.7" font-size="22" fill="#e2e2e2" text-anchor="end" font-weight="400" >1,8</text><line x1="1624" y1="333.5" x2="2496" y2="333.5" stroke="#9a9a9a" stroke-width="2"/><line x1="1614" y1="333.5" x2="1624" y2="333.5" stroke="#dddddd" stroke-width="2.5"/><text x="1614.0" y="341.5" font-size="22" fill="#e2e2e2" text-anchor="end" font-weight="400" >2</text><line x1="1624" y1="273.3" x2="2496" y2="273.3" stroke="#9a9a9a" stroke-width="2"/><line x1="1614" y1="273.3" x2="1624" y2="273.3" stroke="#dddddd" stroke-width="2.5"/><text x="1614.0" y="281.3" font-size="22" fill="#e2e2e2" text-anchor="end" font-weight="400" >2,2</text><line x1="1624" y1="213.1" x2="2496" y2="213.1" stroke="#9a9a9a" stroke-width="2"/><line x1="1614" y1="213.1" x2="1624" y2="213.1" stroke="#dddddd" stroke-width="2.5"/><text x="1614.0" y="221.1" font-size="22" fill="#e2e2e2" text-anchor="end" font-weight="400" >2,4</text><rect x="1624" y="157.5" width="872" height="483.0" fill="none" stroke="#9a9a9a" stroke-width="2"/><line x1="1624.0" y1="640.5" x2="1624.0" y2="649.5" stroke="#dddddd" stroke-width="2.5"/><text x="1624.0" y="674.0" font-size="22" fill="#e2e2e2" text-anchor="middle" font-weight="400" >0</text><line x1="1711.2" y1="640.5" x2="1711.2" y2="649.5" stroke="#dddddd" stroke-width="2.5"/><text x="1711.2" y="674.0" font-size="22" fill="#e2e2e2" text-anchor="middle" font-weight="400" >10</text><line x1="1798.4" y1="640.5" x2="1798.4" y2="649.5" stroke="#dddddd" stroke-width="2.5"/><text x="1798.4" y="674.0" font-size="22" fill="#e2e2e2" text-anchor="middle" font-weight="400" >20</text><line x1="1885.6" y1="640.5" x2="1885.6" y2="649.5" stroke="#dddddd" stroke-width="2.5"/><text x="1885.6" y="674.0" font-size="22" fill="#e2e2e2" text-anchor="middle" font-weight="400" >30</text><line x1="1972.8" y1="640.5" x2="1972.8" y2="649.5" stroke="#dddddd" stroke-width="2.5"/><text x="1972.8" y="674.0" font-size="22" fill="#e2e2e2" text-anchor="middle" font-weight="400" >40</text><line x1="2060.0" y1="640.5" x2="2060.0" y2="649.5" stroke="#dddddd" stroke-width="2.5"/><text x="2060.0" y="674.0" font-size="22" fill="#e2e2e2" text-anchor="middle" font-weight="400" >50</text><line x1="2147.2" y1="640.5" x2="2147.2" y2="649.5" stroke="#dddddd" stroke-width="2.5"/><text x="2147.2" y="674.0" font-size="22" fill="#e2e2e2" text-anchor="middle" font-weight="400" >60</text><line x1="2234.4" y1="640.5" x2="2234.4" y2="649.5" stroke="#dddddd" stroke-width="2.5"/><text x="2234.4" y="674.0" font-size="22" fill="#e2e2e2" text-anchor="middle" font-weight="400" >70</text><line x1="2321.6" y1="640.5" x2="2321.6" y2="649.5" stroke="#dddddd" stroke-width="2.5"/><text x="2321.6" y="674.0" font-size="22" fill="#e2e2e2" text-anchor="middle" font-weight="400" >80</text><line x1="2408.8" y1="640.5" x2="2408.8" y2="649.5" stroke="#dddddd" stroke-width="2.5"/><text x="2408.8" y="674.0" font-size="22" fill="#e2e2e2" text-anchor="middle" font-weight="400" >90</text><line x1="2496.0" y1="640.5" x2="2496.0" y2="649.5" stroke="#dddddd" stroke-width="2.5"/><text x="2496.0" y="674.0" font-size="22" fill="#e2e2e2" text-anchor="middle" font-weight="400" >100</text><text x="2040.0" y="149.0" font-size="22" fill="#e2e2e2" text-anchor="middle" font-weight="400" >Gamma Log/Log</text><clipPath id="gclip"><rect x="1624" y="158.5" width="872" height="483.0"/></clipPath><g clip-path="url(#gclip)"><polyline points="1624.0,547.6 1711.2,194.4 1798.4,191.1 1885.6,197.6 1972.8,172.8 2060.0,167.4 2144.6,159.5 2407.1,159.5 2496.0,245.6" fill="none" stroke="#8a8a8a" stroke-width="4" stroke-linejoin="round"/><polyline points="1622.3,546.7 1631.4,457.0 1635.7,448.2 1640.1,438.3 1644.4,427.0 1648.8,415.0 1653.1,403.2 1657.4,391.6 1661.8,382.3 1666.1,374.7 1670.5,368.2 1674.8,362.6 1679.1,357.6 1683.5,353.0 1687.8,348.6 1692.2,344.4 1696.5,340.3 1700.8,336.6 1705.2,333.3 1709.5,330.2 1713.9,327.4 1718.2,324.8 1722.5,322.3 1726.9,319.9 1731.2,317.7 1735.6,315.6 1739.9,313.6 1744.2,311.6 1748.6,309.7 1752.9,307.7 1757.3,305.9 1761.6,304.1 1765.9,302.3 1770.3,300.7 1774.6,299.1 1778.9,297.6 1783.3,296.2 1787.6,294.9 1792.0,293.7 1796.3,292.6 1800.6,291.6 1805.0,290.6 1809.3,289.7 1813.7,288.9 1818.0,288.0 1822.3,287.2 1826.7,286.5 1831.0,285.7 1835.4,285.0 1839.7,284.4 1844.0,283.7 1848.4,283.1 1852.7,282.5 1857.1,281.9 1861.4,281.3 1865.7,280.7 1870.1,280.1 1874.4,279.5 1878.8,279.0 1883.1,278.4 1887.4,277.8 1891.8,277.3 1896.1,276.7 1900.5,276.1 1904.8,275.6 1909.1,275.1 1913.5,274.6 1917.8,274.1 1922.2,273.6 1926.5,273.1 1930.8,272.6 1935.2,272.1 1939.5,271.6 1943.9,271.2 1948.2,270.7 1952.5,270.3 1956.9,269.9 1961.2,269.5 1965.6,269.1 1969.9,268.7 1974.2,268.3 1978.6,267.9 1982.9,267.6 1987.3,267.3 1991.6,267.0 1995.9,266.6 2000.3,266.3 2004.6,265.9 2009.0,265.5 2013.3,265.1 2017.6,264.8 2022.0,264.4 2026.3,264.0 2030.7,263.6 2035.0,263.2 2039.3,262.8 2043.7,262.4 2048.0,262.1 2052.4,261.7 2056.7,261.4 2061.0,261.1 2065.4,260.9 2069.7,260.6 2074.0,260.3 2078.4,260.1 2082.7,259.8 2087.1,259.6 2091.4,259.3 2095.7,259.1 2100.1,258.8 2104.4,258.6 2108.8,258.3 2113.1,258.1 2117.4,257.9 2121.8,257.7 2126.1,257.4 2130.5,257.2 2134.8,257.0 2139.1,256.8 2143.5,256.6 2147.8,256.4 2152.2,256.2 2156.5,256.0 2160.8,255.8 2165.2,255.6 2169.5,255.4 2173.9,255.2 2178.2,255.0 2182.5,254.9 2186.9,254.7 2191.2,254.5 2195.6,254.3 2199.9,254.2 2204.2,254.0 2208.6,253.9 2212.9,253.7 2217.3,253.6 2221.6,253.4 2225.9,253.3 2230.3,253.1 2234.6,253.0 2239.0,252.8 2243.3,252.7 2247.6,252.6 2252.0,252.5 2256.3,252.3 2260.7,252.2 2265.0,252.1 2269.3,251.9 2273.7,251.8 2278.0,251.7 2282.4,251.6 2286.7,251.4 2291.0,251.3 2295.4,251.2 2299.7,251.1 2304.1,250.9 2308.4,250.8 2312.7,250.7 2317.1,250.6 2321.4,250.5 2325.8,250.4 2330.1,250.2 2334.4,250.1 2338.8,250.0 2343.1,249.9 2347.5,249.8 2351.8,249.7 2356.1,249.6 2360.5,249.5 2364.8,249.4 2369.1,249.3 2373.5,249.2 2377.8,249.1 2382.2,249.0 2386.5,248.9 2390.8,248.8 2395.2,248.7 2399.5,248.6 2403.9,248.5 2408.2,248.5 2412.5,248.4 2416.9,248.3 2421.2,248.2 2425.6,248.1 2429.9,248.1 2434.2,248.0 2438.6,247.9 2442.9,247.9 2447.3,247.8 2451.6,247.7 2455.9,247.7 2460.3,247.6 2464.6,247.6 2469.0,247.5 2473.3,247.5 2477.6,247.4 2482.0,247.4 2486.3,247.4 2490.7,247.3 2495.0,247.3" fill="none" stroke="#ffff00" stroke-width="4" stroke-linejoin="round"/></g><text x="48.0" y="176.5" font-size="59" fill="#f0f0f0" text-anchor="start" font-weight="400" textLength="256" lengthAdjust="spacingAndGlyphs">Grayscale</text><text x="142.0" y="738.0" font-size="46" fill="#eeeeee" text-anchor="start" font-weight="400" textLength="329" lengthAdjust="spacingAndGlyphs">Avg dE2000: 5,7</text><text x="767.0" y="738.0" font-size="46" fill="#eeeeee" text-anchor="start" font-weight="400" textLength="290" lengthAdjust="spacingAndGlyphs">Avg CCT: 6284</text><text x="1337.0" y="738.0" font-size="46" fill="#eeeeee" text-anchor="start" font-weight="400" textLength="420" lengthAdjust="spacingAndGlyphs">Contrast Ratio: 1709</text><text x="2003.0" y="738.0" font-size="46" fill="#eeeeee" text-anchor="start" font-weight="400" textLength="362" lengthAdjust="spacingAndGlyphs">Total Gamma: 2,6</text><text x="492.0" y="953.0" font-size="19.5" fill="#f0f0f0" text-anchor="middle" font-weight="400" >0</text><text x="666.8" y="953.0" font-size="19.5" fill="#f0f0f0" text-anchor="middle" font-weight="400" >10</text><text x="841.6" y="953.0" font-size="19.5" fill="#f0f0f0" text-anchor="middle" font-weight="400" >20</text><text x="1016.5" y="953.0" font-size="19.5" fill="#f0f0f0" text-anchor="middle" font-weight="400" >30</text><text x="1191.3" y="953.0" font-size="19.5" fill="#f0f0f0" text-anchor="middle" font-weight="400" >40</text><text x="1366.1" y="953.0" font-size="19.5" fill="#f0f0f0" text-anchor="middle" font-weight="400" >50</text><text x="1540.9" y="953.0" font-size="19.5" fill="#f0f0f0" text-anchor="middle" font-weight="400" >60</text><text x="1715.7" y="953.0" font-size="19.5" fill="#f0f0f0" text-anchor="middle" font-weight="400" >70</text><text x="1890.6" y="953.0" font-size="19.5" fill="#f0f0f0" text-anchor="middle" font-weight="400" >80</text><text x="2065.4" y="953.0" font-size="19.5" fill="#f0f0f0" text-anchor="middle" font-weight="400" >90</text><text x="2240.2" y="953.0" font-size="19.5" fill="#f0f0f0" text-anchor="middle" font-weight="400" >100</text><text x="0.0" y="0.0" font-size="20" fill="#f0f0f0" text-anchor="middle" font-weight="400" transform="translate(406,810) rotate(-90)">Actual</text><text x="0.0" y="0.0" font-size="20" fill="#f0f0f0" text-anchor="middle" font-weight="400" transform="translate(406,897) rotate(-90)">Target</text><text x="34.0" y="1047.0" font-size="44" fill="#eeeeee" text-anchor="start" font-weight="400" textLength="332" lengthAdjust="spacingAndGlyphs">Current Reading</text><text x="34.0" y="1112.0" font-size="36" fill="#eeeeee" text-anchor="start" font-weight="400" textLength="156" lengthAdjust="spacingAndGlyphs">x: 0,3138</text><text x="34.0" y="1174.0" font-size="36" fill="#eeeeee" text-anchor="start" font-weight="400" textLength="156" lengthAdjust="spacingAndGlyphs">y: 0,3399</text><text x="34.0" y="1235.0" font-size="36" fill="#eeeeee" text-anchor="start" font-weight="400" textLength="167" lengthAdjust="spacingAndGlyphs">fL: 155,33</text><text x="34.0" y="1298.0" font-size="36" fill="#eeeeee" text-anchor="start" font-weight="400" textLength="242" lengthAdjust="spacingAndGlyphs">cd/m²: 532,19</text><rect x="577" y="1014" width="363" height="262" fill="none" stroke="#8a8a8a" stroke-width="2"/><line x1="591.6" y1="1276" x2="591.6" y2="1284" stroke="#dddddd" stroke-width="2"/><text x="591.6" y="1309.0" font-size="22" fill="#e2e2e2" text-anchor="middle" font-weight="400" >0,29</text><line x1="664.0" y1="1276" x2="664.0" y2="1284" stroke="#dddddd" stroke-width="2"/><text x="664.0" y="1309.0" font-size="22" fill="#e2e2e2" text-anchor="middle" font-weight="400" >0,3</text><line x1="736.4" y1="1276" x2="736.4" y2="1284" stroke="#dddddd" stroke-width="2"/><text x="736.4" y="1309.0" font-size="22" fill="#e2e2e2" text-anchor="middle" font-weight="400" >0,31</text><line x1="808.8" y1="1276" x2="808.8" y2="1284" stroke="#dddddd" stroke-width="2"/><text x="808.8" y="1309.0" font-size="22" fill="#e2e2e2" text-anchor="middle" font-weight="400" >0,32</text><line x1="881.2" y1="1276" x2="881.2" y2="1284" stroke="#dddddd" stroke-width="2"/><text x="881.2" y="1309.0" font-size="22" fill="#e2e2e2" text-anchor="middle" font-weight="400" >0,33</text><line x1="569" y1="1244.0" x2="577" y2="1244.0" stroke="#dddddd" stroke-width="2"/><text x="568.0" y="1252.0" font-size="22" fill="#e2e2e2" text-anchor="end" font-weight="400" >0,31</text><line x1="569" y1="1191.7" x2="577" y2="1191.7" stroke="#dddddd" stroke-width="2"/><text x="568.0" y="1199.7" font-size="22" fill="#e2e2e2" text-anchor="end" font-weight="400" >0,32</text><line x1="569" y1="1139.4" x2="577" y2="1139.4" stroke="#dddddd" stroke-width="2"/><text x="568.0" y="1147.4" font-size="22" fill="#e2e2e2" text-anchor="end" font-weight="400" >0,33</text><line x1="569" y1="1087.1" x2="577" y2="1087.1" stroke="#dddddd" stroke-width="2"/><text x="568.0" y="1095.1" font-size="22" fill="#e2e2e2" text-anchor="end" font-weight="400" >0,34</text><line x1="569" y1="1034.8" x2="577" y2="1034.8" stroke="#dddddd" stroke-width="2"/><text x="568.0" y="1042.8" font-size="22" fill="#e2e2e2" text-anchor="end" font-weight="400" >0,35</text><clipPath id="cieclip"><rect x="578" y="1015" width="361" height="260"/></clipPath><g clip-path="url(#cieclip)"><line x1="620" y1="1278" x2="942" y2="1055" stroke="#000" stroke-width="4"/></g><rect x="747.5" y="1134.5" width="20" height="20" fill="#fff" stroke="#000" stroke-width="3"/><circle cx="740.5" cy="1134" r="7" fill="#111" stroke="#000" stroke-width="1"/><circle cx="789" cy="1086" r="6.5" fill="#333" stroke="#000" stroke-width="1.2"/><circle cx="787" cy="1084" r="6.5" fill="#444" stroke="#000" stroke-width="1.2"/><circle cx="786" cy="1083" r="6.5" fill="#666" stroke="#000" stroke-width="1.2"/><circle cx="784" cy="1082" r="6.5" fill="#888" stroke="#000" stroke-width="1.2"/><circle cx="782" cy="1081" r="6.5" fill="#aaa" stroke="#000" stroke-width="1.2"/><circle cx="779" cy="1080" r="6.5" fill="#ccc" stroke="#000" stroke-width="1.2"/><circle cx="777.5" cy="1080.5" r="6.5" fill="#ddd" stroke="#000" stroke-width="1.2"/><circle cx="765" cy="1086.5" r="6.5" fill="#fff" stroke="#000" stroke-width="1.2"/><text x="1255.0" y="1010.5" font-size="23" fill="#f2f2f2" text-anchor="middle" font-weight="400" >0</text><text x="1359.0" y="1010.5" font-size="23" fill="#f2f2f2" text-anchor="middle" font-weight="400" >10</text><text x="1457.0" y="1010.5" font-size="23" fill="#f2f2f2" text-anchor="middle" font-weight="400" >20</text><text x="1555.1" y="1010.5" font-size="23" fill="#f2f2f2" text-anchor="middle" font-weight="400" >30</text><text x="1653.2" y="1010.5" font-size="23" fill="#f2f2f2" text-anchor="middle" font-weight="400" >40</text><text x="1751.2" y="1010.5" font-size="23" fill="#f2f2f2" text-anchor="middle" font-weight="400" >50</text><text x="1849.2" y="1010.5" font-size="23" fill="#f2f2f2" text-anchor="middle" font-weight="400" >60</text><text x="1947.3" y="1010.5" font-size="23" fill="#f2f2f2" text-anchor="middle" font-weight="400" >70</text><text x="2045.3" y="1010.5" font-size="23" fill="#f2f2f2" text-anchor="middle" font-weight="400" >80</text><text x="2143.4" y="1010.5" font-size="23" fill="#f2f2f2" text-anchor="middle" font-weight="400" >90</text><text x="2241.4" y="1010.5" font-size="23" fill="#f2f2f2" text-anchor="middle" font-weight="400" >100</text><text x="985.0" y="1051.5" font-size="23.5" fill="#f2f2f2" text-anchor="start" font-weight="700" >x: CIE31</text><text x="1204.5" y="1051.5" font-size="23.5" fill="#f0f0f0" text-anchor="start" font-weight="400" >0,28</text><text x="1316.0" y="1051.5" font-size="23.5" fill="#f0f0f0" text-anchor="start" font-weight="400" >0,31</text><text x="1414.0" y="1051.5" font-size="23.5" fill="#f0f0f0" text-anchor="start" font-weight="400" >0,32</text><text x="1512.1" y="1051.5" font-size="23.5" fill="#f0f0f0" text-anchor="start" font-weight="400" >0,32</text><text x="1610.2" y="1051.5" font-size="23.5" fill="#f0f0f0" text-anchor="start" font-weight="400" >0,32</text><text x="1708.2" y="1051.5" font-size="23.5" fill="#f0f0f0" text-anchor="start" font-weight="400" >0,32</text><text x="1806.2" y="1051.5" font-size="23.5" fill="#f0f0f0" text-anchor="start" font-weight="400" >0,32</text><text x="1904.3" y="1051.5" font-size="23.5" fill="#f0f0f0" text-anchor="start" font-weight="400" >0,32</text><text x="2002.3" y="1051.5" font-size="23.5" fill="#f0f0f0" text-anchor="start" font-weight="400" >0,32</text><text x="2100.4" y="1051.5" font-size="23.5" fill="#f0f0f0" text-anchor="start" font-weight="400" >0,32</text><text x="2198.4" y="1051.5" font-size="23.5" fill="#f0f0f0" text-anchor="start" font-weight="400" >0,31</text><text x="985.0" y="1090.7" font-size="23.5" fill="#f2f2f2" text-anchor="start" font-weight="700" >y: CIE31</text><text x="1204.5" y="1090.7" font-size="23.5" fill="#f0f0f0" text-anchor="start" font-weight="400" >0,28</text><text x="1316.0" y="1090.7" font-size="23.5" fill="#f0f0f0" text-anchor="start" font-weight="400" >0,33</text><text x="1414.0" y="1090.7" font-size="23.5" fill="#f0f0f0" text-anchor="start" font-weight="400" >0,34</text><text x="1512.1" y="1090.7" font-size="23.5" fill="#f0f0f0" text-anchor="start" font-weight="400" >0,34</text><text x="1610.2" y="1090.7" font-size="23.5" fill="#f0f0f0" text-anchor="start" font-weight="400" >0,34</text><text x="1708.2" y="1090.7" font-size="23.5" fill="#f0f0f0" text-anchor="start" font-weight="400" >0,34</text><text x="1806.2" y="1090.7" font-size="23.5" fill="#f0f0f0" text-anchor="start" font-weight="400" >0,34</text><text x="1904.3" y="1090.7" font-size="23.5" fill="#f0f0f0" text-anchor="start" font-weight="400" >0,34</text><text x="2002.3" y="1090.7" font-size="23.5" fill="#f0f0f0" text-anchor="start" font-weight="400" >0,34</text><text x="2100.4" y="1090.7" font-size="23.5" fill="#f0f0f0" text-anchor="start" font-weight="400" >0,34</text><text x="2198.4" y="1090.7" font-size="23.5" fill="#f0f0f0" text-anchor="start" font-weight="400" >0,34</text><text x="985.0" y="1129.9" font-size="23.5" fill="#f2f2f2" text-anchor="start" font-weight="700" >Y</text><text x="1204.5" y="1129.9" font-size="23.5" fill="#f0f0f0" text-anchor="start" font-weight="400" >0,31</text><text x="1316.0" y="1129.9" font-size="23.5" fill="#f0f0f0" text-anchor="start" font-weight="400" >1,98</text><text x="1414.0" y="1129.9" font-size="23.5" fill="#f0f0f0" text-anchor="start" font-weight="400" >10,16</text><text x="1512.1" y="1129.9" font-size="23.5" fill="#f0f0f0" text-anchor="start" font-weight="400" >27,84</text><text x="1610.2" y="1129.9" font-size="23.5" fill="#f0f0f0" text-anchor="start" font-weight="400" >52,84</text><text x="1708.2" y="1129.9" font-size="23.5" fill="#f0f0f0" text-anchor="start" font-weight="400" >92,53</text><text x="1806.2" y="1129.9" font-size="23.5" fill="#f0f0f0" text-anchor="start" font-weight="400" >141,56</text><text x="1904.3" y="1129.9" font-size="23.5" fill="#f0f0f0" text-anchor="start" font-weight="400" >203,78</text><text x="2002.3" y="1129.9" font-size="23.5" fill="#f0f0f0" text-anchor="start" font-weight="400" >290,54</text><text x="2100.4" y="1129.9" font-size="23.5" fill="#f0f0f0" text-anchor="start" font-weight="400" >390,86</text><text x="2198.4" y="1129.9" font-size="23.5" fill="#f0f0f0" text-anchor="start" font-weight="400" >532,19</text><text x="985.0" y="1169.1" font-size="23.5" fill="#f2f2f2" text-anchor="start" font-weight="700" >Target Y</text><text x="1204.5" y="1169.1" font-size="23.5" fill="#f0f0f0" text-anchor="start" font-weight="400" >0,00</text><text x="1316.0" y="1169.1" font-size="23.5" fill="#f0f0f0" text-anchor="start" font-weight="400" >5,50</text><text x="1414.0" y="1169.1" font-size="23.5" fill="#f0f0f0" text-anchor="start" font-weight="400" >17,62</text><text x="1512.1" y="1169.1" font-size="23.5" fill="#f0f0f0" text-anchor="start" font-weight="400" >38,46</text><text x="1610.2" y="1169.1" font-size="23.5" fill="#f0f0f0" text-anchor="start" font-weight="400" >70,71</text><text x="1708.2" y="1169.1" font-size="23.5" fill="#f0f0f0" text-anchor="start" font-weight="400" >114,88</text><text x="1806.2" y="1169.1" font-size="23.5" fill="#f0f0f0" text-anchor="start" font-weight="400" >169,53</text><text x="1904.3" y="1169.1" font-size="23.5" fill="#f0f0f0" text-anchor="start" font-weight="400" >236,93</text><text x="2002.3" y="1169.1" font-size="23.5" fill="#f0f0f0" text-anchor="start" font-weight="400" >321,35</text><text x="2100.4" y="1169.1" font-size="23.5" fill="#f0f0f0" text-anchor="start" font-weight="400" >421,12</text><text x="2198.4" y="1169.1" font-size="23.5" fill="#f0f0f0" text-anchor="start" font-weight="400" >532,19</text><text x="985.0" y="1208.3" font-size="23.5" fill="#f2f2f2" text-anchor="start" font-weight="700" textLength="193" lengthAdjust="spacingAndGlyphs">Gamma Log/Log</text><text x="1204.5" y="1208.3" font-size="23.5" fill="#f0f0f0" text-anchor="start" font-weight="400" >1,28</text><text x="1316.0" y="1208.3" font-size="23.5" fill="#f0f0f0" text-anchor="start" font-weight="400" >2,45</text><text x="1414.0" y="1208.3" font-size="23.5" fill="#f0f0f0" text-anchor="start" font-weight="400" >2,46</text><text x="1512.1" y="1208.3" font-size="23.5" fill="#f0f0f0" text-anchor="start" font-weight="400" >2,44</text><text x="1610.2" y="1208.3" font-size="23.5" fill="#f0f0f0" text-anchor="start" font-weight="400" >2,52</text><text x="1708.2" y="1208.3" font-size="23.5" fill="#f0f0f0" text-anchor="start" font-weight="400" >2,54</text><text x="1806.2" y="1208.3" font-size="23.5" fill="#f0f0f0" text-anchor="start" font-weight="400" >2,59</text><text x="1904.3" y="1208.3" font-size="23.5" fill="#f0f0f0" text-anchor="start" font-weight="400" >2,67</text><text x="2002.3" y="1208.3" font-size="23.5" fill="#f0f0f0" text-anchor="start" font-weight="400" >2,71</text><text x="2100.4" y="1208.3" font-size="23.5" fill="#f0f0f0" text-anchor="start" font-weight="400" >2,99</text><text x="2198.4" y="1208.3" font-size="23.5" fill="#f0f0f0" text-anchor="start" font-weight="400" >2,27</text><text x="985.0" y="1247.5" font-size="23.5" fill="#f2f2f2" text-anchor="start" font-weight="700" >CCT</text><text x="1204.5" y="1247.5" font-size="23.5" fill="#f0f0f0" text-anchor="start" font-weight="400" >10564,00</text><text x="1316.0" y="1247.5" font-size="23.5" fill="#f0f0f0" text-anchor="start" font-weight="400" >6616,00</text><text x="1414.0" y="1247.5" font-size="23.5" fill="#f0f0f0" text-anchor="start" font-weight="400" >6236,00</text><text x="1512.1" y="1247.5" font-size="23.5" fill="#f0f0f0" text-anchor="start" font-weight="400" >6201,00</text><text x="1610.2" y="1247.5" font-size="23.5" fill="#f0f0f0" text-anchor="start" font-weight="400" >6206,00</text><text x="1708.2" y="1247.5" font-size="23.5" fill="#f0f0f0" text-anchor="start" font-weight="400" >6217,00</text><text x="1806.2" y="1247.5" font-size="23.5" fill="#f0f0f0" text-anchor="start" font-weight="400" >6227,00</text><text x="1904.3" y="1247.5" font-size="23.5" fill="#f0f0f0" text-anchor="start" font-weight="400" >6237,00</text><text x="2002.3" y="1247.5" font-size="23.5" fill="#f0f0f0" text-anchor="start" font-weight="400" >6253,00</text><text x="2100.4" y="1247.5" font-size="23.5" fill="#f0f0f0" text-anchor="start" font-weight="400" >6275,00</text><text x="2198.4" y="1247.5" font-size="23.5" fill="#f0f0f0" text-anchor="start" font-weight="400" >6372,00</text><text x="985.0" y="1286.7" font-size="23.5" fill="#f2f2f2" text-anchor="start" font-weight="700" >ΔE 2000</text><text x="1204.5" y="1286.7" font-size="23.5" fill="#f0f0f0" text-anchor="start" font-weight="400" >0,50</text><text x="1316.0" y="1286.7" font-size="23.5" fill="#f0f0f0" text-anchor="start" font-weight="400" >3,58</text><text x="1414.0" y="1286.7" font-size="23.5" fill="#f0f0f0" text-anchor="start" font-weight="400" >4,58</text><text x="1512.1" y="1286.7" font-size="23.5" fill="#f0f0f0" text-anchor="start" font-weight="400" >4,54</text><text x="1610.2" y="1286.7" font-size="23.5" fill="#f0f0f0" text-anchor="start" font-weight="400" >5,76</text><text x="1708.2" y="1286.7" font-size="23.5" fill="#f0f0f0" text-anchor="start" font-weight="400" >6,14</text><text x="1806.2" y="1286.7" font-size="23.5" fill="#f0f0f0" text-anchor="start" font-weight="400" >6,00</text><text x="1904.3" y="1286.7" font-size="23.5" fill="#f0f0f0" text-anchor="start" font-weight="400" >6,11</text><text x="2002.3" y="1286.7" font-size="23.5" fill="#f0f0f0" text-anchor="start" font-weight="400" >6,27</text><text x="2100.4" y="1286.7" font-size="23.5" fill="#f0f0f0" text-anchor="start" font-weight="400" >6,71</text><text x="2198.4" y="1286.7" font-size="23.5" fill="#f0f0f0" text-anchor="start" font-weight="400" >7,09</text><text x="75.0" y="1387.0" font-size="10" fill="#2a2a2a" text-anchor="middle" font-weight="700" >0</text><text x="227.0" y="1387.0" font-size="10" fill="#2a2a2a" text-anchor="middle" font-weight="700" >10</text><text x="379.0" y="1387.0" font-size="10" fill="#2a2a2a" text-anchor="middle" font-weight="700" >20</text><text x="531.0" y="1387.0" font-size="10" fill="#2a2a2a" text-anchor="middle" font-weight="700" >30</text><text x="683.0" y="1387.0" font-size="10" fill="#2a2a2a" text-anchor="middle" font-weight="700" >40</text><text x="835.0" y="1387.0" font-size="10" fill="#2a2a2a" text-anchor="middle" font-weight="700" >50</text><text x="987.0" y="1387.0" font-size="10" fill="#2a2a2a" text-anchor="middle" font-weight="700" >60</text><text x="1139.0" y="1387.0" font-size="10" fill="#2a2a2a" text-anchor="middle" font-weight="700" >70</text><text x="1291.0" y="1387.0" font-size="10" fill="#2a2a2a" text-anchor="middle" font-weight="700" >80</text><text x="1443.0" y="1387.0" font-size="10" fill="#2a2a2a" text-anchor="middle" font-weight="700" >90</text><text x="1595.0" y="1387.0" font-size="10" fill="#ffffff" text-anchor="middle" font-weight="700" >100</text>
</svg>
</body></html>
